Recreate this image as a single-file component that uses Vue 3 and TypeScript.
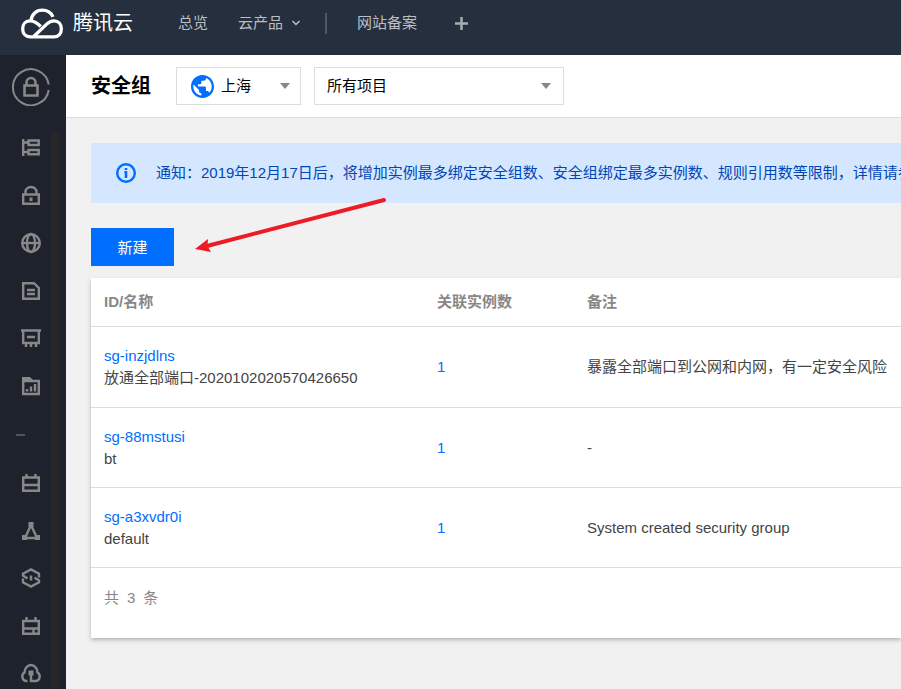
<script setup lang="ts">
import { ref } from 'vue'

interface SecurityGroup {
  id: string
  name: string
  instances: number
  remark: string
}

const region = ref('上海')
const project = ref('所有项目')

const groups: SecurityGroup[] = [
  { id: 'sg-inzjdlns', name: '放通全部端口-2020102020570426650', instances: 1, remark: '暴露全部端口到公网和内网，有一定安全风险' },
  { id: 'sg-88mstusi', name: 'bt', instances: 1, remark: '-' },
  { id: 'sg-a3xvdr0i', name: 'default', instances: 1, remark: 'System created security group' },
]
</script>

<template>
  <div class="app">
    <header class="topbar">
      <a class="brand" href="#">
        <svg class="brand-mark" viewBox="63 22 126 92" fill="none" stroke="#fff" stroke-width="10">
          <path d="M93 60C95 40 109 28 127 28C142 28 153 35 159 48" />
          <path d="M122 77C110 64 100 60 89 60C76 60 68 71 68 84C68 98 77 108 91 108H162C176 108 184 98 184 84C184 70 175 60 162 60C152 60 146 64 140 70L102 106" />
        </svg>
        <span class="brand-name">腾讯云</span>
      </a>
      <nav class="topnav">
        <a href="#">总览</a>
        <a href="#" class="products">
          云产品
          <svg class="chevron" viewBox="0 0 10 6" fill="none" stroke="currentColor" stroke-width="1.500"><path d="M1.500 1L5 4.500L8.500 1" /></svg>
        </a>
        <span class="divider"></span>
        <a href="#">网站备案</a>
        <button class="add" type="button" aria-label="+">
          <svg viewBox="0 0 13 13" fill="none" stroke="currentColor" stroke-width="2.500"><path d="M6.500 0V13M0 6.500H13" /></svg>
        </button>
      </nav>
    </header>

    <div class="body">
      <aside class="sidebar">
        <a class="product" href="#">
          <svg viewBox="0 0 38 38" fill="none" stroke="#888" stroke-width="2">
            <path d="M36.700 16.500A18 18 0 1 0 36.700 22" />
            <path d="M12.500 17.500H25.500V27.500H12.500Z" stroke-width="2.600" />
            <path d="M14.500 17V14.500A4.500 4.500 0 0 1 23.500 14.500V17" stroke-width="2.600" />
          </svg>
        </a>
        <div class="side-scroll">
          <nav class="side-list">
            <a href="#" class="side-item">
              <svg class="icon" viewBox="0 0 20 20">
                <path d="M2.200 2V19M2 5.500H7M2 15H7" />
                <path d="M7.500 3.500H17.700V8H7.500ZM7.500 13H17.700V17.300H7.500Z" />
              </svg>
            </a>
            <a href="#" class="side-item">
              <svg class="icon" viewBox="0 0 20 20">
                <path d="M2.200 9.500H17.800V18.700H2.200ZM4.500 9V7A5.500 5 0 0 1 15.500 7V9" />
                <path d="M10 12.500V16" stroke-width="3" />
              </svg>
            </a>
            <a href="#" class="side-item">
              <svg class="icon" viewBox="0 0 20 20">
                <circle cx="10" cy="10" r="8.800" /><ellipse cx="10" cy="10" rx="4" ry="9" /><path d="M1 10H19" />
              </svg>
            </a>
            <a href="#" class="side-item">
              <svg class="icon" viewBox="0 0 20 20">
                <path d="M2.200 2.200H13L17.800 7V17.800H2.200ZM6 9H14M6 13H14" />
              </svg>
            </a>
            <a href="#" class="side-item">
              <svg class="icon" viewBox="0 0 20 20">
                <path d="M0 1.500H20M2.200 1V14H17.800V1M6 8H14M5 14V18M10 14V18M15 14V18" />
              </svg>
            </a>
            <a href="#" class="side-item">
              <svg class="icon" viewBox="0 0 20 20">
                <path d="M2.200 4V17H17.800V4Z" /><path class="solid" d="M1 0H9L12 3H19V5H1Z" />
                <path d="M6 12V14.500M10 9.500V14.500M14 7V14.500" />
              </svg>
            </a>
            <div class="side-gap"><span></span></div>
            <a href="#" class="side-item">
              <svg class="icon" viewBox="0 0 20 20">
                <path d="M2.200 4.500H17.800V17.800H2.200ZM2 12H18M5.500 1V5M14.500 1V5" />
              </svg>
            </a>
            <a href="#" class="side-item">
              <svg class="icon" viewBox="0 0 20 20">
                <path d="M10 4L4 17H16Z" /><path class="solid" d="M7.500 1H12.500V6H7.500ZM1 14H6V19H1ZM14 14H19V19H14Z" />
              </svg>
            </a>
            <a href="#" class="side-item">
              <svg class="icon" viewBox="0 0 20 20">
                <path d="M18 8.500V4.800L10 0.400L2 4.800V6.500L6.500 9.500M2 9.500V13.200L10 17.600L18 13.200V11.500L13.500 8.500" />
                <path d="M10 6.500V11.500" stroke-width="2.500" />
              </svg>
            </a>
            <a href="#" class="side-item">
              <svg class="icon" viewBox="0 0 20 20">
                <path d="M2.200 4H17.800V16.800H2.200ZM2 11.500H18M12.500 12V17M5.500 0V4M14.500 0V4" />
              </svg>
            </a>
            <a href="#" class="side-item">
              <svg class="icon" viewBox="0 0 20 20">
                <path d="M6.500 16H5A4 4.500 0 0 1 3.500 7.500A6.500 7.500 0 0 1 16.500 7.500A4 4.500 0 0 1 15 16H10V8" />
                <path class="solid" d="M7.500 5.500H12.500V10.500H7.500Z" />
              </svg>
            </a>
          </nav>
          <span class="scrollbar"></span>
        </div>
      </aside>

      <main class="main">
        <div class="page-head">
          <h1>安全组</h1>
          <label class="select region">
            <svg class="globe" viewBox="2 2 20 20">
              <path fill="#006eff" d="M12 2C6.480 2 2 6.480 2 12s4.480 10 10 10 10-4.480 10-10S17.520 2 12 2zm-1 17.930c-3.950-.49-7-3.850-7-7.930 0-.62.08-1.210.21-1.790L9 15v1c0 1.100.9 2 2 2v1.930zm6.900-2.540c-.26-.81-1-1.390-1.900-1.390h-1v-3c0-.55-.45-1-1-1H8v-2h2c.55 0 1-.45 1-1V7h2c1.100 0 2-.9 2-2v-.41c2.930 1.190 5 4.060 5 7.410 0 2.080-.8 3.970-2.100 5.390z" />
            </svg>
            <select v-model="region" aria-label="上海"><option>上海</option></select>
            <span class="caret"></span>
          </label>
          <label class="select project">
            <select v-model="project" aria-label="所有项目"><option>所有项目</option></select>
            <span class="caret"></span>
          </label>
        </div>

        <div class="content">
          <div class="notice">
            <svg class="info" viewBox="0 0 20 20" fill="none" stroke="#006eff">
              <circle cx="10" cy="10" r="8.800" stroke-width="2.400" />
              <path d="M8.500 9H10" stroke-width="2" /><path d="M10 8V15M10 5V7" stroke-width="2.600" />
            </svg>
            <p>通知：2019年12月17日后，将增加实例最多绑定安全组数、安全组绑定最多实例数、规则引用数等限制，详情请参</p>
          </div>

          <div class="toolbar">
            <button class="create" type="button">新建</button>
            <svg class="pointer" viewBox="191 196 200 60">
              <path d="M384 200L207 246" fill="none" stroke="#ed1c24" stroke-width="4" stroke-linecap="round" />
              <path d="M195 249L208 239L207.500 246L211 252Z" fill="#ed1c24" />
            </svg>
          </div>

          <section class="panel">
            <table>
              <colgroup><col class="col-id" /><col class="col-count" /><col /></colgroup>
              <thead>
                <tr><th>ID/名称</th><th>关联实例数</th><th>备注</th></tr>
              </thead>
              <tbody>
                <tr v-for="group in groups" :key="group.id">
                  <td><a href="#">{{ group.id }}</a><div>{{ group.name }}</div></td>
                  <td><a href="#">{{ group.instances }}</a></td>
                  <td>{{ group.remark }}</td>
                </tr>
              </tbody>
            </table>
            <footer class="total"><span>共</span><span>{{ groups.length }}</span><span>条</span></footer>
          </section>
        </div>
      </main>
    </div>
  </div>
</template>

<style>
body {
  background: #f1f1f1;
}
</style>

<style scoped>
* {
  box-sizing: border-box;
}
.app {
  display: flex;
  flex-direction: column;
  height: 100vh;
  overflow: hidden;
  font-family: "Liberation Sans", "Noto Sans CJK SC", sans-serif;
  font-size: 15px;
  line-height: 22px;
  color: #444;
}
a {
  color: #006eff;
  text-decoration: none;
}
.topbar {
  display: flex;
  flex: none;
  height: 55px;
  padding: 0 21px 9px;
  background: #262f3e;
}
.brand {
  display: flex;
  align-items: center;
  gap: 10px;
}
.brand-mark {
  width: 42px;
  height: 31px;
}
.brand-name {
  color: #fff;
  font-size: 20px;
}
.topnav {
  display: flex;
  align-items: center;
  margin-left: 45px;
  gap: 30px;
}
.topnav a {
  color: #bbbfc4;
}
.products {
  display: flex;
  align-items: center;
  gap: 8px;
}
.chevron {
  width: 10px;
  height: 6px;
}
.divider {
  width: 2px;
  height: 21px;
  margin-left: -6px;
  background: #505864;
}
.add {
  display: flex;
  margin-left: 8px;
  padding: 0;
  border: 0;
  background: none;
  color: #a8adb2;
}
.add svg {
  width: 13px;
  height: 13px;
}
.body {
  display: flex;
  flex: 1;
  min-height: 0;
}
.sidebar {
  display: flex;
  flex-direction: column;
  flex: none;
  width: 66px;
  background: #1e222d;
}
.product {
  display: flex;
  flex: none;
  height: 68px;
  padding: 13px 12px;
}
.product svg {
  width: 38px;
  height: 38px;
}
.side-scroll {
  display: flex;
  flex: 1;
  min-height: 0;
  overflow: hidden;
}
.side-list {
  width: 51px;
}
.side-item {
  display: flex;
  align-items: center;
  height: 48px;
  padding-left: 21px;
}
.icon {
  width: 20px;
  height: 20px;
  overflow: visible;
  fill: none;
  stroke: #888;
  stroke-width: 2.4;
}
.icon .solid {
  fill: #888;
  stroke: none;
}
.side-gap {
  display: flex;
  align-items: center;
  height: 48px;
  padding-left: 16px;
}
.side-gap span {
  width: 9px;
  height: 2px;
  background: #4d5562;
}
.scrollbar {
  width: 9px;
  margin-top: 8px;
  border-radius: 4px 4px 0 0;
  background: #262626;
}
.main {
  flex: 1;
  min-width: 0;
}
.page-head {
  display: flex;
  align-items: center;
  height: 63px;
  padding-left: 25px;
  border-bottom: 1px solid #ddd;
  background: #fff;
}
h1 {
  margin: 0 25px 0 0;
  color: #000;
  font-size: 20px;
  line-height: 28px;
}
.select {
  display: flex;
  align-items: center;
  height: 38px;
  padding: 0 10px 0 12px;
  border: 1px solid #ddd;
  background: #fff;
}
.region {
  width: 125px;
  margin-right: 13px;
  padding-left: 14px;
}
.project {
  width: 250px;
  padding-right: 12px;
}
.globe {
  flex: none;
  width: 23px;
  height: 23px;
  margin-right: 7px;
}
select {
  flex: 1;
  min-width: 0;
  height: 36px;
  padding: 0;
  border: 0;
  outline: 0;
  appearance: none;
  background: none;
  color: #000;
  font: inherit;
}
.caret {
  border: 5px solid transparent;
  border-top: 6px solid #888;
  border-bottom: 0;
}
.content {
  padding: 25px 0 25px 25px;
}
.notice {
  display: flex;
  align-items: center;
  gap: 20px;
  height: 60px;
  padding-left: 25px;
  overflow: hidden;
  background: #d5e7ff;
  color: #0046b7;
  white-space: nowrap;
}
.notice p {
  margin: 0;
}
.info {
  flex: none;
  width: 20px;
  height: 20px;
}
.toolbar {
  position: relative;
  margin: 25px 0 12px;
}
.create {
  display: block;
  min-width: 83px;
  height: 38px;
  padding: 2px 25px 0;
  border: 0;
  background: #006eff;
  color: #fff;
  font: inherit;
}
.pointer {
  position: absolute;
  top: -32px;
  left: 100px;
  width: 200px;
  height: 60px;
  pointer-events: none;
}
.panel {
  background: #fff;
  box-shadow: 0 2px 4px rgba(0, 0, 0, 0.25);
}
table {
  width: 100%;
  border-collapse: separate;
  border-spacing: 0;
  table-layout: fixed;
}
.col-id {
  width: 333px;
}
.col-count {
  width: 150px;
}
th,
td {
  padding: 0 13px;
  border-bottom: 1px solid #ddd;
  text-align: left;
  vertical-align: middle;
}
th {
  height: 49px;
  color: #888;
}
td {
  height: 80px;
}
tbody tr:first-child td {
  height: 81px;
}
.total {
  display: flex;
  gap: 8px;
  height: 70px;
  padding: 19px 13px;
  color: #888;
}
</style>
